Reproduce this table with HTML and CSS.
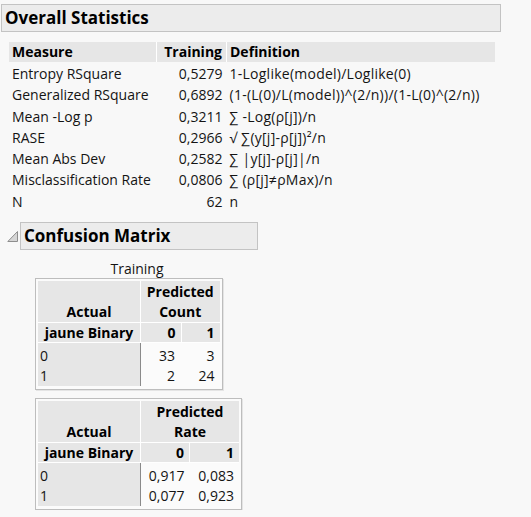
FILE: index.html
```html
<!DOCTYPE html>
<html>
<head>
<meta charset="utf-8">
<link rel="stylesheet" href="styles.css">
</head>
<body>
<div class="report">
  <div class="title-box wide">Overall Statistics</div>
  <table class="stats">
    <thead>
      <tr><th class="c-measure">Measure</th><th class="c-train">Training</th><th class="c-def">Definition</th></tr>
    </thead>
    <tbody>
      <tr><td class="c-measure">Entropy RSquare</td><td class="c-train">0,5279</td><td class="c-def">1-Loglike(model)/Loglike(0)</td></tr>
      <tr><td class="c-measure">Generalized RSquare</td><td class="c-train">0,6892</td><td class="c-def">(1-(L(0)/L(model))^(2/n))/(1-L(0)^(2/n))</td></tr>
      <tr><td class="c-measure">Mean -Log p</td><td class="c-train">0,3211</td><td class="c-def">∑ -Log(ρ[j])/n</td></tr>
      <tr><td class="c-measure">RASE</td><td class="c-train">0,2966</td><td class="c-def">√ ∑(y[j]-ρ[j])²/n</td></tr>
      <tr><td class="c-measure">Mean Abs Dev</td><td class="c-train">0,2582</td><td class="c-def">∑ |y[j]-ρ[j]|/n</td></tr>
      <tr><td class="c-measure">Misclassification Rate</td><td class="c-train">0,0806</td><td class="c-def">∑ (ρ[j]≠ρMax)/n</td></tr>
      <tr><td class="c-measure">N</td><td class="c-train">62</td><td class="c-def">n</td></tr>
    </tbody>
  </table>

  <div class="section-head">
    <svg class="tri" width="12" height="13" viewBox="0 0 12 13"><path d="M10.5 1.5 L10.5 11.5 L0.8 11.5 Z" fill="#d6d6d6" stroke="#8e8e8e" stroke-width="1"/></svg>
    <div class="title-box cm-title">Confusion Matrix</div>
  </div>

  <div class="caption">Training</div>
  <div class="cm-box">
    <table class="cm cm-count">
      <tr class="h1"><th class="lab lab-top">Actual</th><th class="pred" colspan="2">Predicted<br>Count</th></tr>
      <tr class="h2"><th class="lab">jaune Binary</th><th class="num n0">0</th><th class="num n1">1</th></tr>
      <tr class="first"><td class="rowlab">0</td><td class="val v0">33</td><td class="val v1">3</td></tr>
      <tr><td class="rowlab">1</td><td class="val v0">2</td><td class="val v1">24</td></tr>
    </table>
  </div>
  <div class="cm-box">
    <table class="cm cm-rate">
      <tr class="h1"><th class="lab lab-top">Actual</th><th class="pred" colspan="2">Predicted<br>Rate</th></tr>
      <tr class="h2"><th class="lab">jaune Binary</th><th class="num n0">0</th><th class="num n1">1</th></tr>
      <tr class="first"><td class="rowlab">0</td><td class="val v0">0,917</td><td class="val v1">0,083</td></tr>
      <tr><td class="rowlab">1</td><td class="val v0">0,077</td><td class="val v1">0,923</td></tr>
    </table>
  </div>
</div>
</body>
</html>
```

FILE: styles.css
```css
html, body {
  margin: 0;
  padding: 0;
  background: #f8f8f8;
}
body {
  font-family: "Open Sans", "Noto Sans", sans-serif;
  font-size: 14px;
  color: #141414;
}
.report {
  padding: 4px 0 0 1px;
}
.title-box {
  box-sizing: border-box;
  height: 28px;
  border: 1px solid #c3c3c3;
  background: #ececec;
  font-weight: 700;
  font-size: 17px;
  line-height: 25px;
  padding-left: 3px;
  color: #000;
  white-space: nowrap;
}
.wide { width: 500px; }

.stats {
  border-collapse: collapse;
  margin: 10px 0 0 8px;
  table-layout: fixed;
  width: 486px;
}
.stats th {
  background: #e6e6e6;
  height: 20px;
  padding: 0;
  font-weight: 700;
  color: #000;
  line-height: 20px;
}
.stats th + th { border-left: 1px solid #fff; }
.stats td {
  height: 21.3px;
  padding: 0;
  line-height: 21.3px;
  white-space: nowrap;
}
.stats td.c-def { letter-spacing: 0.25px; }
.stats tbody tr:first-child td { padding-top: 1px; }
.c-measure { width: 144px; text-align: left; padding-left: 3px !important; }
.c-train { width: 65px; text-align: right; padding-right: 4px !important; }
.c-def { text-align: left; padding-left: 3px !important; }

.section-head {
  display: flex;
  align-items: center;
  margin-top: 10px;
}
.tri { margin: 1px 1px 0 6px; }
.cm-title { width: 238px; }

.caption {
  margin-top: 10px;
  line-height: 18px;
  width: 272px;
  text-align: center;
  color: #141414;
}

.cm-box {
  display: block;
  width: fit-content;
  margin-left: 34px;
  border: 1px solid #bdbdbd;
  background: #fbfbfb;
  padding: 2px 2px 3px 2px;
  box-shadow: 1px 1px 0 #e4e4e4;
}
.cm-box + .cm-box { margin-top: 8px; }

.cm {
  border-collapse: collapse;
}
.cm th {
  background: #e6e6e6;
  font-weight: 700;
  color: #000;
  padding: 0;
}
.cm .h1 th { border-bottom: 1px solid #fff; line-height: 20px; padding-top: 1px; }
.cm .h2 th { border-bottom: 1px solid #fff; line-height: 19px; }
.cm th + th { border-left: 1px solid #fff; }
.cm .lab { width: 102px; text-align: center; }
.cm .lab-top { vertical-align: bottom; }
.cm .pred { text-align: center; }
.cm .num { text-align: right; padding-right: 5px; }
.cm td {
  padding: 0;
  line-height: 20px;
}
.cm .first td { padding-top: 3px; }
.cm .rowlab {
  background: #e6e6e6;
  border-right: 1px solid #8a8a8a;
  padding-left: 2px;
}
.cm .val {
  text-align: right;
  padding-right: 5px;
}
.cm-count .n0, .cm-count .v0 { width: 34px; }
.cm-count .n1, .cm-count .v1 { width: 33px; }
.cm-rate .n0, .cm-rate .v0 { width: 43px; }
.cm-rate .n1, .cm-rate .v1 { width: 44px; }
.cm-count .v0 { padding-right: 6px; }
```
